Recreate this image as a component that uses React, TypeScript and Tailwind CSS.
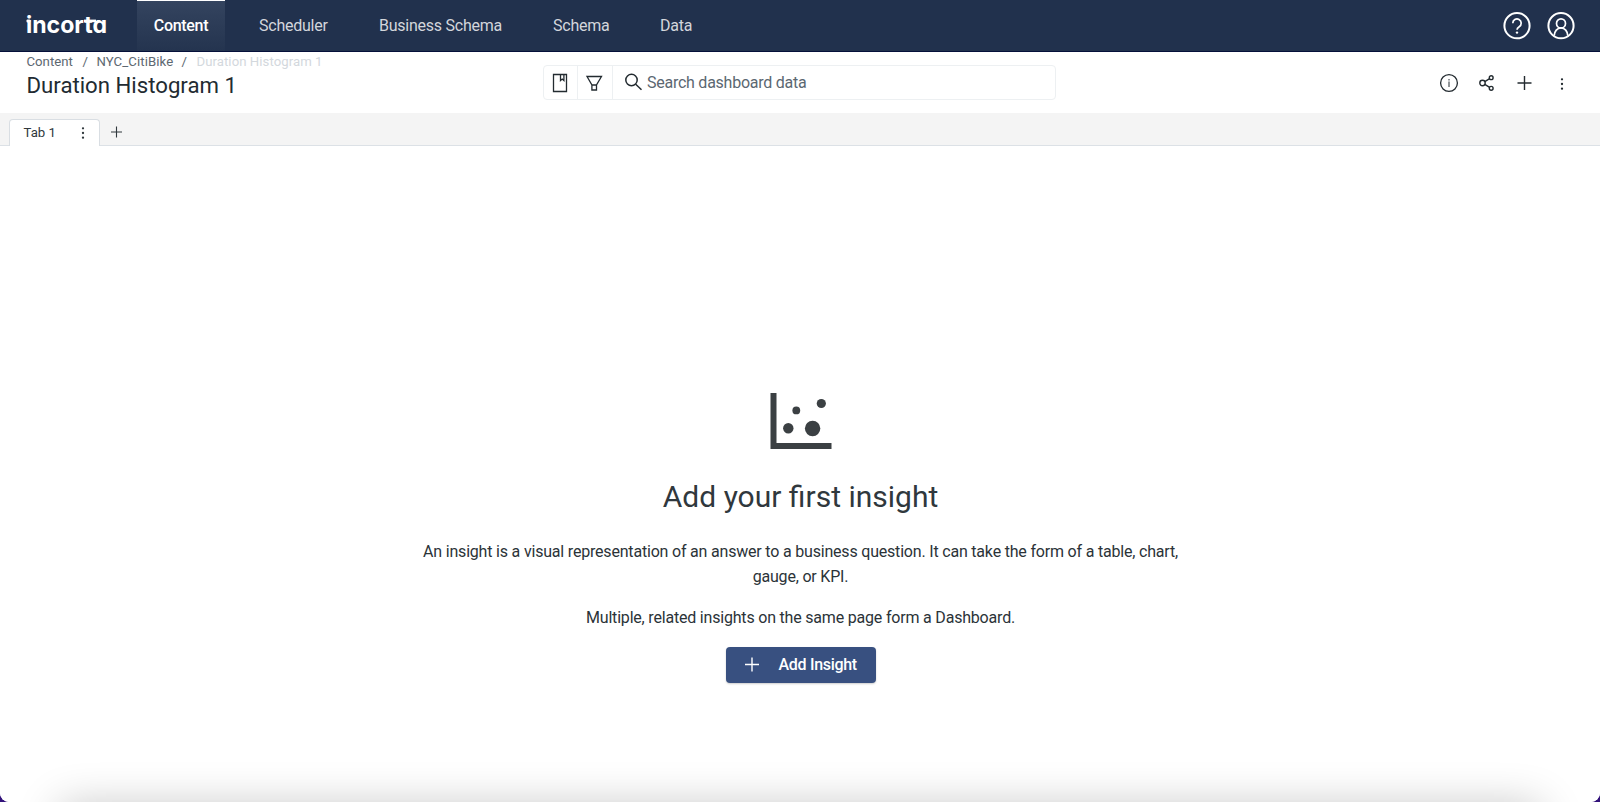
import type { ReactNode } from 'react';

type IconProps = { className?: string; children: ReactNode; size: number; stroke?: number };

function Icon({ className = '', children, size, stroke = 1.3 }: IconProps) {
  return (
    <svg
      className={`shrink-0 ${className}`}
      width={size}
      height={size}
      viewBox={`0 0 ${size} ${size}`}
      fill="none"
      stroke="currentColor"
      strokeWidth={stroke}
    >
      {children}
    </svg>
  );
}

function Dots({ className = '' }: { className?: string }) {
  return (
    <svg className={`shrink-0 ${className}`} width="4" height="14" viewBox="0 0 4 14" fill="currentColor">
      <circle cx="2" cy="2.3" r="1.15" />
      <circle cx="2" cy="7" r="1.15" />
      <circle cx="2" cy="11.7" r="1.15" />
    </svg>
  );
}

const links = [
  { label: 'Scheduler', className: 'ml-[34px] w-[69px]' },
  { label: 'Business Schema', className: 'ml-[51px] w-[123px]' },
  { label: 'Schema', className: 'ml-[51px] w-[57px]' },
  { label: 'Data', className: 'ml-[50px] w-[34px]' },
];

function Logo() {
  return (
    <svg className="overflow-visible" width="84" height="34" viewBox="0 0 84 34" fill="#fff">
      <rect x="0.5" y="11.6" width="4" height="2.8" rx="1" />
      <rect x="58" y="11.6" width="12" height="2.6" />
      <text
        x="0"
        y="24.5"
        textLength="81"
        lengthAdjust="spacingAndGlyphs"
        className="font-[Inter] text-[23.5px] font-bold [font-feature-settings:'cv11']"
      >
        incorta
      </text>
    </svg>
  );
}

function NavBar() {
  return (
    <header className="flex h-[52px] shrink-0 items-stretch border-b border-[#05103a] bg-[#21314d] pr-[25px] text-base text-[#d3d6dc]">
      <div className="flex w-[137px] items-start pt-[8px] pl-[26px]">
        <Logo />
      </div>
      <div className="flex w-[88px] items-center justify-center border-t border-white bg-linear-to-b from-[#34445f] to-[#24344f] font-medium text-white">
        <span className="tracking-[-0.3px]">Content</span>
      </div>
      {links.map((l) => (
        <div key={l.label} className={`flex items-center tracking-[-0.24px] whitespace-nowrap ${l.className}`}>
          {l.label}
        </div>
      ))}
      <div className="ml-auto flex items-center gap-[16px] text-white">
        <Icon size={28} stroke={2}>
          <circle cx="14" cy="13.7" r="12.6" />
          <path d="M9.8 11.2a4.2 4.2 0 1 1 6.4 3.5c-1.5.9-2.2 1.7-2.2 3.1" strokeWidth="1.7" />
          <circle cx="14" cy="20.6" r="1.2" fill="currentColor" stroke="none" />
        </Icon>
        <Icon size={28} stroke={2}>
          <circle cx="14" cy="13.7" r="12.6" />
          <circle cx="14" cy="11.4" r="4.5" strokeWidth="1.7" />
          <path d="M7.2 23.8c.2-4.6 3-7.9 6.8-7.9s6.6 3.3 6.8 7.9" strokeWidth="1.7" />
        </Icon>
      </div>
    </header>
  );
}

function TitleBar() {
  return (
    <div className="flex h-[61px] shrink-0 bg-white">
      <div className="w-[543px] pl-[26.5px]">
        <div className="flex h-[20px] items-center text-[13.2px] whitespace-nowrap text-[#5d6871]">
          <span className="w-[56px]">Content</span>
          <span className="w-[14px]">/</span>
          <span className="w-[85px] tracking-[0.08px]">NYC_CitiBike</span>
          <span className="w-[15px]">/</span>
          <span className="tracking-[0.05px] text-[#d3d8dd]">Duration Histogram 1</span>
        </div>
        <h1 className="text-[22.2px] leading-[27px] text-[#222b31]">Duration Histogram 1</h1>
      </div>
      <div className="mt-[13px] flex h-[35px] w-[513px] rounded-[4px] border border-[#edf0f2] text-[#232b30]">
        <div className="flex w-[34px] items-center justify-center border-r border-[#edf0f2] pr-[1px]">
          <Icon size={20}>
            <path d="M3.5 1.5h13v17h-13zM10.5 1.5v6l1.7-1.5 1.7 1.5v-6" />
          </Icon>
        </div>
        <div className="flex w-[35px] items-center justify-center border-r border-[#edf0f2] pr-[2px]">
          <Icon size={20}>
            <path d="M3 3.5h14.5l-5 8.5v5H7.9v-5zM7.9 12h4.6" />
          </Icon>
        </div>
        <div className="flex items-center pl-[11px]">
          <Icon size={20} stroke={1.5}>
            <circle cx="7.5" cy="7" r="5.7" />
            <path d="M11.7 11.2l5.8 5.6" />
          </Icon>
          <span className="ml-[3px] text-base tracking-[-0.25px] text-[#5b6771]">Search dashboard data</span>
        </div>
      </div>
      <div className="mt-[13px] ml-auto flex h-[35px] items-center pt-[1px] pr-[36px] text-[#232b30]">
        <Icon size={20} className="mr-[18px]">
          <circle cx="10" cy="10" r="8.4" />
          <path d="M10 8.5v5.5M10 6v1.5" strokeWidth="1" />
        </Icon>
        <Icon size={20} className="mr-[17px]" stroke={1.4}>
          <circle cx="5.5" cy="10" r="2.7" />
          <circle cx="14.2" cy="4.7" r="1.9" />
          <circle cx="14.2" cy="15.3" r="1.9" />
          <path d="M7.8 8.6l4.8-2.9M7.8 11.4l4.8 2.9" />
        </Icon>
        <Icon size={20} className="mr-[26px]" stroke={1.4}>
          <path d="M10.5 3v14M3.500 10h14" />
        </Icon>
        <Dots className="mt-[2px]" />
      </div>
    </div>
  );
}

function TabStrip() {
  return (
    <div className="flex h-[33px] shrink-0 items-end bg-[#f4f4f4] text-[#30383d] shadow-[inset_0_-1px_0_#dce1e6]">
      <div className="ml-[9px] flex h-[27px] w-[91px] items-center rounded-t-[4px] border border-b-0 border-[#d9dee3] bg-white pl-[13.5px]">
        <span className="text-[13.2px]">Tab 1</span>
        <Dots className="mr-[14.5px] ml-auto" />
      </div>
      <Icon size={14} className="mb-[7px] ml-[9px]" stroke={1.1}>
        <path d="M7.5 1.5v11M2 7h11" />
      </Icon>
    </div>
  );
}

function EmptyState() {
  return (
    <main className="flex flex-1 flex-col items-center bg-white pl-[1px] text-[#2b3338]">
      <svg className="mt-[247px] ml-[1px]" width="62" height="57" viewBox="0 0 62 57" fill="#3b4043">
        <path d="M.5 0h6v50h55v6H.5z" />
        <circle cx="18.3" cy="35.2" r="5.2" />
        <circle cx="26.3" cy="17.4" r="3.9" />
        <circle cx="42.6" cy="35.5" r="7.7" />
        <circle cx="51.3" cy="10.5" r="4.6" />
      </svg>
      <h2 className="mt-[27px] text-[30px] leading-[40px] text-[#30383d]">Add your first insight</h2>
      <p className="mt-[22px] w-[780px] text-center text-base leading-[25px] tracking-[-0.193px]">
        An insight is a visual representation of an answer to a business question. It can take the form of a table, chart,
        <br />
        gauge, or KPI.
      </p>
      <p className="mt-[16px] text-base leading-[25px] tracking-[-0.195px]">
        Multiple, related insights on the same page form a Dashboard.
      </p>
      <button className="mt-[17px] flex h-[36px] w-[150px] items-center rounded-[4px] bg-[#385080] pl-[18px] font-medium text-white shadow-[0_1px_2px_rgba(0,0,0,0.2)]">
        <Icon size={16} stroke={1.4}>
          <path d="M8 .5v14M1 7.5h14" />
        </Icon>
        <span className="ml-[19px] text-base tracking-[-0.3px]">Add Insight</span>
      </button>
    </main>
  );
}

export default function App() {
  return (
    <div className="relative h-[802px] w-[1600px] overflow-hidden bg-[#32127a] font-[Roboto,sans-serif]">
      <div className="relative flex h-full flex-col overflow-hidden rounded-b-[9px] bg-white">
        <NavBar />
        <TitleBar />
        <TabStrip />
        <EmptyState />
        <div className="absolute -bottom-[44px] left-[60px] h-[40px] w-[1480px] shadow-[0_0_44px_rgba(0,0,0,0.24)]" />
      </div>
    </div>
  );
}
